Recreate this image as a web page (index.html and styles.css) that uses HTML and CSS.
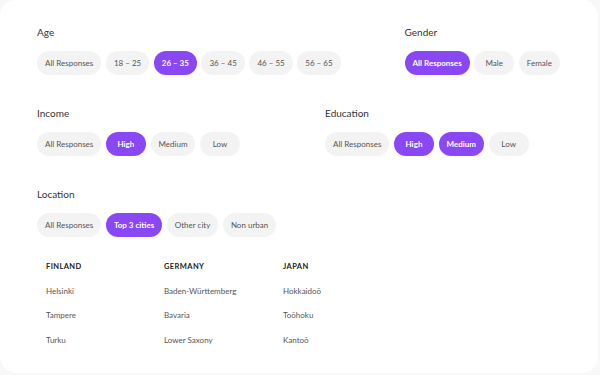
FILE: index.html
```html
<!DOCTYPE html>
<html lang="en">

<head>
    <meta charset="UTF-8">
    <meta name="viewport" content="width=device-width, initial-scale=1.0">
    <title>Filters</title>
    <link rel="stylesheet" href="styles.css">
</head>

<body>

    <div class="card">

        <!-- Age / Gender -->
        <div class="row">
            <div class="group">
                <div class="label">Age</div>
                <div class="pills">
                    <span class="pill">All Responses</span>
                    <span class="pill">18 – 25</span>
                    <span class="pill active">26 – 35</span>
                    <span class="pill">36 – 45</span>
                    <span class="pill">46 – 55</span>
                    <span class="pill">56 – 65</span>
                </div>
            </div>
            <div class="group gender">
                <div class="label">Gender</div>
                <div class="pills">
                    <span class="pill active">All Responses</span>
                    <span class="pill">Male</span>
                    <span class="pill">Female</span>
                </div>
            </div>
        </div>

        <!-- Income / Education -->
        <div class="row">
            <div class="group">
                <div class="label">Income</div>
                <div class="pills">
                    <span class="pill">All Responses</span>
                    <span class="pill active">High</span>
                    <span class="pill">Medium</span>
                    <span class="pill">Low</span>
                </div>
            </div>
            <div class="group education">
                <div class="label">Education</div>
                <div class="pills">
                    <span class="pill">All Responses</span>
                    <span class="pill active">High</span>
                    <span class="pill active">Medium</span>
                    <span class="pill">Low</span>
                </div>
            </div>
        </div>

        <!-- Location -->
        <div class="row">
            <div class="group">
                <div class="label">Location</div>
                <div class="pills">
                    <span class="pill">All Responses</span>
                    <span class="pill active">Top 3 cities</span>
                    <span class="pill">Other city</span>
                    <span class="pill">Non urban</span>
                </div>
            </div>
        </div>

        <div class="cities">
            <div class="country">Finland</div>
            <div class="country">Germany</div>
            <div class="country">Japan</div>
            <div>Helsinki</div>
            <div>Baden-Württemberg</div>
            <div>Hokkaidoō</div>
            <div>Tampere</div>
            <div>Bavaria</div>
            <div>Toōhoku</div>
            <div>Turku</div>
            <div>Lower Saxony</div>
            <div>Kantoō</div>
        </div>

    </div>

</body>

</html>
```

FILE: styles.css
```css
body {
    font-family: Lato, "Noto Sans", sans-serif;
    background: #f8f8f8;
    margin: 0;
}

.card {
    background: white;
    width: 598px;
    height: 373px;
    box-sizing: border-box;
    border-radius: 16px;
    padding: 26px 37px 0;
}

.row {
    display: flex;
    margin-bottom: 32px;
}

.gender {
    margin-left: 64px;
}

.education {
    margin-left: 85px;
}

.label {
    font-size: 10px;
    line-height: 12px;
    color: #333;
    margin-bottom: 13px;
}

.pills {
    display: flex;
    gap: 4.6px;
}

.pill {
    height: 24px;
    min-width: 40px;
    box-sizing: border-box;
    padding: 0 8px;
    border-radius: 12px;
    background: #f3f3f3;
    color: #555;
    font-size: 8px;
    display: flex;
    align-items: center;
    justify-content: center;
    white-space: nowrap;
}

.pill.active {
    background: #8a48f4;
    color: white;
    font-weight: bold;
}

/* Cities list */
.cities {
    display: grid;
    grid-template-columns: 118px 119px 100px;
    grid-auto-rows: 24.5px;
    margin-top: -15px;
    padding-left: 9px;
    font-size: 8px;
    color: #555;
    align-items: center;
}

.country {
    text-transform: uppercase;
    font-weight: bold;
    color: #222;
    font-size: 7.5px;
    letter-spacing: 0.4px;
}
```
